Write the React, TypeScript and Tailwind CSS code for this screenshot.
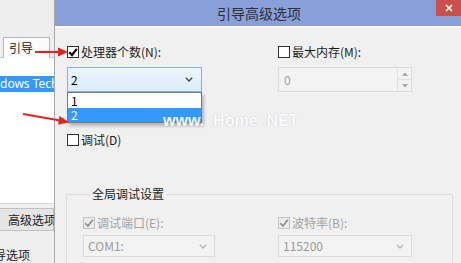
import React from "react";

function Check({ checked, disabled }: { checked?: boolean; disabled?: boolean }) {
  return (
    <span
      className={
        "flex items-center justify-center w-[12px] h-[12px] border shrink-0 " +
        (disabled ? "border-[#c4c4c4] bg-[#ececec]" : "border-[#333333] bg-white")
      }
    >
      {checked && (
        <svg width="10" height="10" viewBox="0 0 10 10">
          <path
            d="M1.3 5.2 L4 8 L8.8 1.8"
            fill="none"
            stroke={disabled ? "#8a8a8a" : "#000"}
            strokeWidth={disabled ? 1.6 : 2.2}
          />
        </svg>
      )}
    </span>
  );
}

function Chevron({ color }: { color: string }) {
  return (
    <svg width="8" height="5" viewBox="0 0 8 5">
      <path d="M0.8 0.8 L4 4 L7.2 0.8" fill="none" stroke={color} strokeWidth="1.4" />
    </svg>
  );
}

export default function App() {
  const cjk = { fontFamily: '"Noto Sans CJK SC", "Noto Sans", sans-serif' };
  return (
    <div
      className="relative w-[461px] h-[263px] overflow-hidden flex bg-[#f0f0f0] text-[12px] text-[#1e1e1e]"
      style={cjk}
    >
      {/* Left background window */}
      <div className="w-[54px] shrink-0 flex flex-col overflow-hidden bg-[#efefef]">
        <div className="h-[37px] shrink-0 bg-[#ededed]" />
        <div className="h-[21px] shrink-0 flex">
          <div className="w-[3px] border-b border-[#c8c8c8]" />
          <div className="w-[47px] border border-b-0 border-[#b9b9b9] bg-[#fbfbfb] pl-[5px] leading-[19px] text-[12px] text-[#222]">
            引导
          </div>
          <div className="flex-1 border-b border-[#c8c8c8]" />
        </div>
        <div className="h-[145px] shrink-0 bg-white pt-[18px]">
          <div
            className="h-[16px] bg-[#3399ff] text-white whitespace-nowrap text-[12px] leading-[16px]"
            style={{ fontFamily: '"Noto Sans", sans-serif' }}
          >
            dows Tech
          </div>
        </div>
        <div className="border-t border-[#d8d8d8] pt-[4px]">
          <div className="h-[23px] -ml-[4px] border border-[#c0c0c0] bg-[#e5e5e5] pl-[11px] leading-[21px] whitespace-nowrap text-[12px] text-[#222]">
            高级选项(
          </div>
          <div className="mt-[16px] -ml-[18px] whitespace-nowrap leading-[16px] text-[12px] text-[#222]">
            引导选项
          </div>
        </div>
      </div>

      {/* Dialog */}
      <div className="flex-1 flex flex-col border-l border-[#a8a8a8] bg-[#f0f0f0]">
        <div className="relative h-[26px] shrink-0 bg-[#889fd9] flex items-center justify-center">
          <span className="text-[14px] text-[#2f2f2f] pl-[2px] pt-[1px]">引导高级选项</span>
          <div className="absolute right-0 top-0 w-[25px] h-[16px] bg-[#c9504c] flex items-center justify-center">
            <svg width="8" height="8" viewBox="0 0 8 8">
              <path d="M1 1 L7 7 M7 1 L1 7" stroke="#fff" strokeWidth="1.6" />
            </svg>
          </div>
        </div>
        <div className="h-[2px] bg-[#fafafa] shrink-0" />

        <div className="pl-[12px] pt-[17px] flex flex-col">
          <div className="grid grid-cols-[135px_134px] gap-x-[76px]">
            {/* Column 1 */}
            <div className="flex flex-col">
              <div className="h-[14px] flex items-center gap-[2px]">
                <Check checked />
                <span className="leading-[14px]">处理器个数(N):</span>
              </div>
              <div className="relative mt-[8px] h-[25px] border border-[#7eb4ea] bg-gradient-to-b from-[#edf5fc] to-[#dcecfc] flex items-center justify-between pl-[3px] pr-[8px]">
                <span className="text-[12px] text-black">2</span>
                <Chevron color="#444" />
                <div className="absolute left-[-1px] right-[-1px] top-[24px] border border-[#7a7a7a] bg-white shadow-[2px_3px_3px_rgba(0,0,0,0.25)]">
                  <div className="h-[15px] leading-[15px] pl-[3px] text-black">1</div>
                  <div className="h-[14px] leading-[14px] pl-[3px] bg-[#3399ff] text-white">2</div>
                </div>
              </div>
            </div>
            {/* Column 2 */}
            <div className="flex flex-col">
              <div className="h-[14px] flex items-center gap-[2px]">
                <Check />
                <span className="leading-[14px]">最大内存(M):</span>
              </div>
              <div className="mt-[8px] h-[25px] border border-[#d9d9d9] bg-[#f3f3f3] flex">
                <span className="flex-1 pl-[5px] leading-[23px] text-[#a0a0a0]">0</span>
                <div className="w-[14px] border-l border-[#e2e2e2] flex flex-col">
                  <div className="flex-1 flex items-center justify-center border-b border-[#e2e2e2]">
                    <svg width="6" height="4" viewBox="0 0 6 4">
                      <path d="M0 4 L3 0.5 L6 4 Z" fill="#a8a8a8" />
                    </svg>
                  </div>
                  <div className="flex-1 flex items-center justify-center">
                    <svg width="6" height="4" viewBox="0 0 6 4">
                      <path d="M0 0 L3 3.5 L6 0 Z" fill="#a8a8a8" />
                    </svg>
                  </div>
                </div>
              </div>
            </div>
          </div>

          <div className="mt-[41px] h-[14px] flex items-center gap-[2px]">
            <Check />
            <span className="leading-[14px]">调试(D)</span>
          </div>

          <fieldset className="mt-[40px] -ml-[1px] w-[387px] border border-[#dcdcdc] pl-[16px] pb-[20px]">
            <legend className="ml-[7px] px-[2px] text-[12px] leading-[14px] text-[#1e1e1e]">全局调试设置</legend>
            <div className="grid grid-cols-[132px_134px] gap-x-[63px] pt-[15px]">
              <div className="flex flex-col">
                <div className="h-[13px] flex items-center gap-[2px]">
                  <Check checked disabled />
                  <span className="leading-[13px] text-[#a3a3a3]">调试端口(E):</span>
                </div>
                <div className="mt-[6px] h-[22px] border border-[#dadada] bg-[#f3f3f3] flex items-center justify-between pl-[4px] pr-[7px]">
                  <span className="text-[#9a9a9a]">COM1:</span>
                  <Chevron color="#b5b5b5" />
                </div>
              </div>
              <div className="flex flex-col">
                <div className="h-[13px] flex items-center gap-[2px]">
                  <Check checked disabled />
                  <span className="leading-[13px] text-[#a3a3a3]">波特率(B):</span>
                </div>
                <div className="mt-[6px] h-[22px] border border-[#dadada] bg-[#f3f3f3] flex items-center justify-between pl-[4px] pr-[7px]">
                  <span className="text-[#9a9a9a]">115200</span>
                  <Chevron color="#b5b5b5" />
                </div>
              </div>
            </div>
          </fieldset>
        </div>
      </div>

      {/* Watermark */}
      <div
        className="absolute left-[163px] top-[112px] text-[16px] font-bold text-white leading-[18px] whitespace-nowrap"
        style={{
          fontFamily: '"Liberation Sans", sans-serif',
          textShadow: "0 0 1px rgba(120,140,170,0.7)",
          opacity: 0.9,
        }}
      >
        www.<span className="opacity-20">x</span>Home .NET
      </div>

      {/* Red arrows */}
      <svg className="absolute left-0 top-0 pointer-events-none" width="461" height="263" viewBox="0 0 461 263">
        <line x1="35" y1="52" x2="59" y2="52" stroke="#e3231c" strokeWidth="2" />
        <path d="M58 47.5 L68 52 L58 56.5 Z" fill="#e3231c" />
        <line x1="23" y1="114" x2="60" y2="120.5" stroke="#e3231c" strokeWidth="2" />
        <path d="M59.5 116 L69 122.3 L58 124.8 Z" fill="#e3231c" />
      </svg>
    </div>
  );
}
